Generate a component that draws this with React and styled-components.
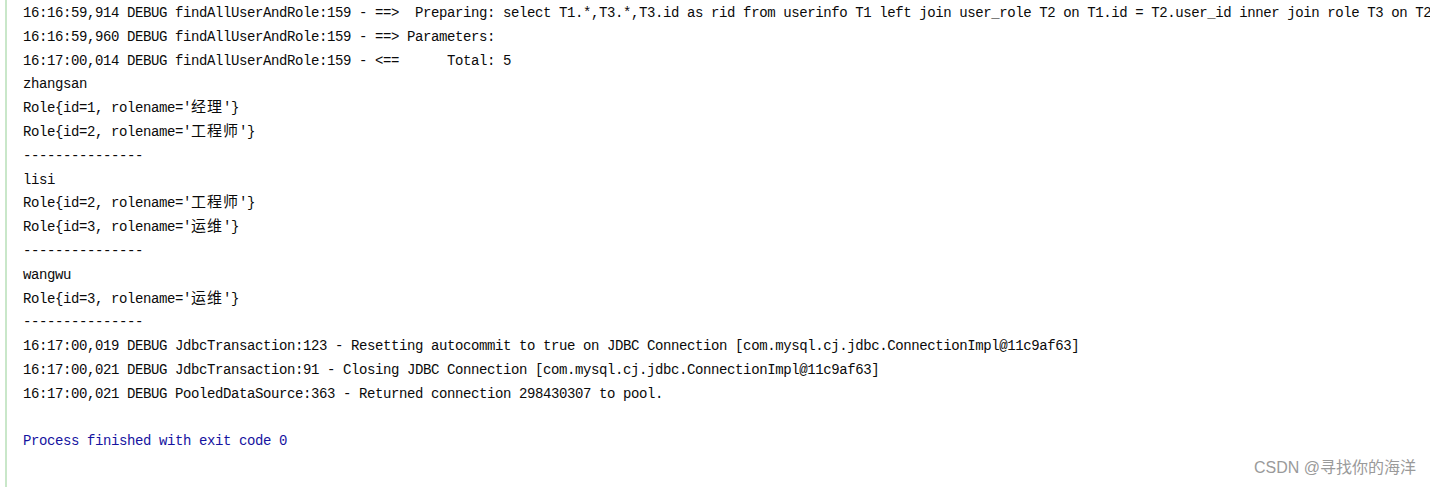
import React from "react";
import styled, { createGlobalStyle } from "styled-components";

const Global = createGlobalStyle`
  html, body { margin: 0; padding: 0; background: #fff; }
  body { width: 1430px; height: 487px; overflow: hidden; }
`;

const Frame = styled.div`
  position: relative;
  width: 1430px;
  height: 487px;
  background: #fff;
  padding-left: 5px;
  box-sizing: border-box;
  overflow: hidden;
`;

const Console = styled.div`
  height: 100%;
  border-left: 2px solid #c9e7c9;
  padding-left: 16px;
  padding-top: 2px;
  box-sizing: border-box;
  overflow: hidden;
`;

const Line = styled.div`
  height: 23.8px;
  line-height: 23.8px;
  white-space: pre;
  font-family: "Liberation Mono", monospace;
  font-size: 14px;
  letter-spacing: -0.4px;
  color: ${(p) => (p.$tone === "exit" ? "#15139f" : "#0a0a0a")};
`;

const Cjk = styled.span`
  font-family: "Noto Sans CJK SC", sans-serif;
  font-size: 15px;
  line-height: 1;
  letter-spacing: 1px;
`;

const Watermark = styled.div`
  position: absolute;
  right: 14px;
  bottom: 9px;
  font-family: "Liberation Sans", "Noto Sans CJK SC", sans-serif;
  font-size: 16px;
  color: #9a9a9a;
  white-space: nowrap;
`;

const role = (id, name) => (
  <>
    {`Role{id=${id}, rolename='`}
    <Cjk>{name}</Cjk>
    {`'}`}
  </>
);

const lines = [
  { t: "16:16:59,914 DEBUG findAllUserAndRole:159 - ==>  Preparing: select T1.*,T3.*,T3.id as rid from userinfo T1 left join user_role T2 on T1.id = T2.user_id inner join role T3 on T2" },
  { t: "16:16:59,960 DEBUG findAllUserAndRole:159 - ==> Parameters: " },
  { t: "16:17:00,014 DEBUG findAllUserAndRole:159 - <==      Total: 5" },
  { t: "zhangsan" },
  { r: [1, "经理"] },
  { r: [2, "工程师"] },
  { t: "---------------" },
  { t: "lisi" },
  { r: [2, "工程师"] },
  { r: [3, "运维"] },
  { t: "---------------" },
  { t: "wangwu" },
  { r: [3, "运维"] },
  { t: "---------------" },
  { t: "16:17:00,019 DEBUG JdbcTransaction:123 - Resetting autocommit to true on JDBC Connection [com.mysql.cj.jdbc.ConnectionImpl@11c9af63]" },
  { t: "16:17:00,021 DEBUG JdbcTransaction:91 - Closing JDBC Connection [com.mysql.cj.jdbc.ConnectionImpl@11c9af63]" },
  { t: "16:17:00,021 DEBUG PooledDataSource:363 - Returned connection 298430307 to pool." },
  { t: "" },
  { t: "Process finished with exit code 0", tone: "exit" },
];

export default function App() {
  return (
    <>
      <Global />
      <Frame>
        <Console>
          {lines.map((l, i) => (
            <Line key={i} $tone={l.tone}>
              {l.r ? role(l.r[0], l.r[1]) : l.t}
            </Line>
          ))}
        </Console>
        <Watermark>CSDN @寻找你的海洋</Watermark>
      </Frame>
    </>
  );
}
